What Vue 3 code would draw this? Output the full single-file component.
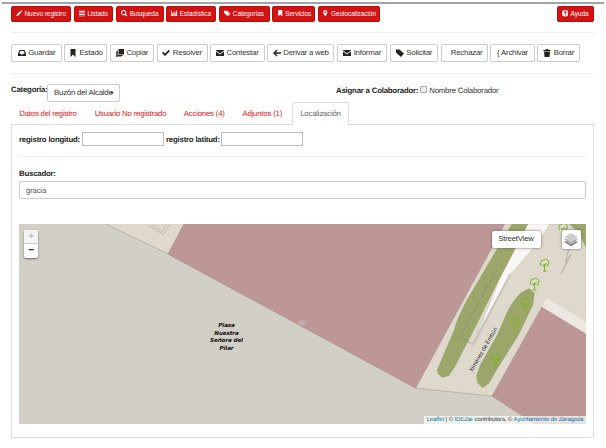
<script setup>
const icons = {
  pencil: 'M1 15l1-4 8-8 3 3-8 8zM11 2l1-1q1-1 2 0l1 1q1 1 0 2l-1 1z',
  list: 'M0 2h16v2H0zM0 6h16v2H0zM0 10h16v2H0zM0 14h16v1.5H0z',
  search: 'M6.5 0a6.5 6.5 0 1 0 3.4 12l3.5 3.7 2.3-2.3-3.7-3.5A6.5 6.5 0 0 0 6.5 0zm0 2.5a4 4 0 1 1 0 8 4 4 0 0 1 0-8z',
  chart: 'M0 1h2v12h14v2H0zM3 8h2v4H3zM6 4h2v8H6zM9 6h2v6H9zM12 2h3v10h-3z',
  tags: 'M0 2h6l7 7-5 6-8-8zM7 2h2l7 7-5 6-1-1 4-5z',
  bookmark: 'M3 0h10v16l-5-5-5 5z',
  pin: 'M8 0a5 5 0 0 0-5 5c0 4 5 11 5 11s5-7 5-11a5 5 0 0 0-5-5zm0 3a2.2 2.2 0 1 1 0 4.4A2.2 2.2 0 0 1 8 3z',
  help: 'M8 0a8 8 0 1 0 0 16A8 8 0 0 0 8 0zM7 11h2.4v2.4H7zM4.5 6q0-3.5 3.6-3.5 3.6 0 3.6 3 0 2-2.3 3v1.3H7V7.3q2-.6 2-1.7 0-.9-1-.9t-1 1.3z',
  inbox: 'M3 2h10l3 7v5H0V9zm1.5 2L2.5 9H5l1 2h4l1-2h2.5l-2-5z',
  copy: 'M5 0h11v11H5zM2.5 3H4v9h9v2H2.5zM0 5h1.5v10h9v1H0z',
  check: 'M0 8l2.5-2.5L6 9l7.5-7.5L16 4 6 14z',
  mail: 'M0 2h16v1L8 9 0 3zM0 5l8 6 8-6v9H0z',
  arrow: 'M0 8l7-7 2 2-3.5 3.5H16v3H5.5L9 13l-2 2z',
  tag: 'M0 1h7l9 8-6 7-10-9z',
  trash: 'M1 2h4l1-2h4l1 2h4v2H1zM2 5h12l-1 11H3z'
}
const nav = [
  { t: 'Nuevo registro', i: 'pencil', w: 60 },
  { t: 'Listado', i: 'list', w: 39.5 },
  { t: 'Busqueda', i: 'search', w: 47.5 },
  { t: 'Estadística', i: 'chart', w: 49.5 },
  { t: 'Categorías', i: 'tags', w: 51 },
  { t: 'Servicios', i: 'bookmark', w: 43 },
  { t: 'Geolocalización', i: 'pin', w: 62 }
]
const actions = [
  { t: 'Guardar', i: 'inbox', w: 51 },
  { t: 'Estado', i: 'bookmark', w: 43 },
  { t: 'Copiar', i: 'copy', w: 44.5 },
  { t: 'Resolver', i: 'check', w: 51 },
  { t: 'Contestar', i: 'mail', w: 54.5 },
  { t: 'Derivar a web', i: 'arrow', w: 67.5 },
  { t: 'Informar', i: 'mail', w: 50.5 },
  { t: 'Solicitar', i: 'tag', w: 48.5 },
  { t: 'Rechazar', gap: true, w: 47 },
  { t: '{ Archivar', w: 45 },
  { t: 'Borrar', i: 'trash', w: 42.5 }
]
const tabs = [
  { t: 'Datos del registro', w: 76 },
  { t: 'Usuario No registrado', w: 89 },
  { t: 'Acciones (4)', w: 58.5 },
  { t: 'Adjuntos (1)', w: 57.5 },
  { t: 'Localización', w: 57, on: true }
]
const trees = [[563, 228], [544.5, 264], [534.5, 283], [525, 303], [515, 322], [495.5, 359]]
</script>

<template>
  <div class="page">
    <div class="topline"></div>
    <nav class="nav">
      <button v-for="b in nav" :key="b.t" class="red" :style="{ width: b.w + 'px' }">
        <svg viewBox="0 0 16 16"><path :d="icons[b.i]" fill-rule="evenodd" /></svg><span>{{ b.t }}</span>
      </button>
      <button class="red help"><svg viewBox="0 0 16 16"><path :d="icons.help" fill-rule="evenodd" /></svg><span>Ayuda</span></button>
    </nav>
    <div class="actions">
      <button v-for="b in actions" :key="b.t" class="plain" :class="{ indent: b.gap }" :style="{ width: b.w + 'px' }">
        <svg v-if="b.i" viewBox="0 0 16 16"><path :d="icons[b.i]" fill-rule="evenodd" /></svg><span>{{ b.t }}</span>
      </button>
    </div>
    <div class="assign">
      <b class="cat">Categoría:</b>
      <div class="select"><span>Buzón del Alcalde</span><i></i></div>
      <div class="collab"><b>Asignar a Colaborador:</b><i class="check"></i><span>Nombre Colaborador</span></div>
    </div>
    <div class="tabs">
      <a v-for="t in tabs" :key="t.t" :class="{ on: t.on }" :style="{ width: t.w + 'px' }">{{ t.t }}</a>
    </div>
    <section class="panel">
      <div class="coords">
        <b class="lon">registro longitud:</b><i class="field"></i><b class="lat">registro latitud:</b><i class="field"></i>
      </div>
      <b class="label">Buscador:</b>
      <div class="query">gracia</div>
      <div class="map">
        <svg class="canvas" viewBox="19 224 567 200">
          <rect x="19" y="224" width="567" height="200" fill="#d1cfc6" />
          <path d="M106 224H184L168 254Z" fill="#dfd8cb" />
          <path d="M106 224L168 254L416 388L492 396L535 424" fill="none" stroke="#b3a99b" stroke-width=".8" />
          <path d="M149 226L163.5 234.5L169.5 225M152 225L162.5 231.5L166.5 224" fill="none" stroke="#aaa69e" stroke-width=".6" />
          <path d="M184 224H505L415.5 388L168 254Z" fill="#bd9696" stroke="#a99290" stroke-width=".5" />
          <path d="M505 224H586V334L492 396L416 388Z" fill="#dfd8cc" stroke="#b3a99b" stroke-width=".5" />
          <path d="M528 224H550L537 244L511.5 273L478 335L472 347L500 278Z" fill="#f8f7f5" stroke="#c4beb5" stroke-width=".5" />
          <path d="M510.5 274L473 344" stroke="#c9c4bb" stroke-width="2" />
          <path d="M511.7 224H528L500 278L474 330L455 366.7L449 375.7L442.7 377.7L438 374L437 370L454 330Q456 320 466.7 300Z" fill="#9ca66b" />
          <path d="M497 269L460 337L472 344" fill="none" stroke="#8d9763" stroke-width=".9" />
          <path d="M470 343L474 344L491 312" fill="none" stroke="#c9c4bb" stroke-width="1.5" />
          <path d="M529 288.3L534.7 292.7L533 305L518.7 335L496.7 370L489.3 383.3L482.7 388L477.3 383L476.3 376L480 365L497 335L508 310Q514 299 521.7 292Z" fill="#9ca66b" />
          <path d="M569 224H586V248L578 232Z" fill="#9ca66b" />
          <path d="M547 298.3L586 322V334L541.7 307.3Z" fill="#ede8df" />
          <path d="M541.7 307.3L586 334V424H535L492 396Z" fill="#bd9696" stroke="#a99290" stroke-width=".5" />
          <path d="M569 248L565.5 263L571 254L561 274" fill="none" stroke="#bbb6ae" stroke-width="1.3" />
          <g v-for="(p, i) in trees" :key="i" :transform="`translate(${p[0]} ${p[1]})`" fill="none" stroke="#7ab51c" stroke-width="1">
            <path d="M-3 2Q-5 1-4-1-4-4-1-4 1-6 3-4 5-3 4-1 5 2 2 2M0 7V0M0 3L-2 0M0 2L2-1M-1.5 7H2" />
          </g>
        </svg>
        <div class="plaza">Plaza<br>Nuestra<br>Señora del<br>Pilar</div>
        <span class="number">18</span>
        <span class="street">Ximénez de Embún</span>
        <div class="zoom"><span class="off">+</span><span>−</span></div>
        <button class="sv">StreetView</button>
        <div class="layers">
          <svg viewBox="0 0 16 16">
            <path d="M1 10L8 6.5L15 10L8 14.5Z" fill="#888" />
            <path d="M1 7.5L8 4L15 7.5L8 12Z" fill="#aaa" stroke="#fff" stroke-width=".4" />
            <path d="M1 5L8 1L15 5L8 9.5Z" fill="#ccc" stroke="#fff" stroke-width=".4" />
          </svg>
        </div>
        <div class="credit"><a>Leaflet</a> | © <a>IDEZar</a> contributors, © <a>Ayuntamiento de Zaragoza</a></div>
      </div>
    </section>
  </div>
</template>

<style>
body { margin: 0; background: #fff; overflow: hidden; }
</style>
<style scoped>
* { box-sizing: border-box; }
.page { width: 606px; height: 448px; padding: 2px 12px 0 11px; font: 7.8px/10px "Liberation Sans", Arial, sans-serif; letter-spacing: -.2px; color: #333; text-rendering: geometricPrecision; white-space: nowrap; }
.topline { height: 1.5px; margin: 0 -10px 0 -9px; background: #a3a3a3; }
button { font: inherit; letter-spacing: inherit; padding: 0; margin: 0; display: flex; align-items: center; justify-content: center; flex: none; }
.nav { display: flex; gap: 2.8px; height: 29px; padding-top: 2px; border-bottom: 1px solid #eee; }
.red { height: 16px; gap: 2px; border: 1px solid #b90e0e; border-radius: 2px; background: #d31313; color: #fff; font-size: 6.4px; letter-spacing: 0; }
.red svg { width: 6.5px; height: 6.5px; fill: #fff; }
.help { width: 37.5px; margin-left: auto; }
.actions { display: flex; gap: 2.4px; height: 41px; padding-top: 11px; border-bottom: 1px solid #eee; }
.plain { height: 18.5px; gap: 2.5px; border: 1px solid #ccc; border-radius: 2px; background: #fff; color: #333; }
.plain svg { width: 8px; height: 8px; fill: #222; }
.plain span { padding-top: 1px; }
.indent { padding-left: 5px; }
b { color: #222; }
.assign { display: flex; height: 28.5px; }
.cat { width: 36px; padding-top: 11px; }
.select { width: 73px; height: 18px; margin-top: 10.5px; padding: 0 5px 0 6px; display: flex; align-items: center; border: 1px solid #ccc; border-radius: 2px; }
.select i { border: 2px solid transparent; border-top: 2.5px solid #222; border-bottom: 0; margin-left: -3px; }
.collab { display: flex; margin-left: 216px; padding-top: 12.5px; }
.check { width: 7px; height: 7px; margin: 0 2px 0 2px; border: 1px solid #aaa; border-radius: 1px; background: #eee; }
.tabs { display: flex; height: 22px; position: relative; }
.tabs a { color: #d9201f; text-align: center; line-height: 20px; padding-right: 2px; padding-top: 1.5px; }
.tabs a.on { color: #666; border: 1px solid #ddd; border-bottom: 0; border-radius: 2px 2px 0 0; background: #fff; height: 23px; padding: .5px 0 0; }
.panel { height: 314px; border: 1px solid #ddd; padding: 0 7px; }
.coords { display: flex; height: 32px; padding-top: 7px; border-bottom: 1px solid #eee; line-height: 15px; }
.lon { width: 63px; }
.lat { width: 57px; padding-left: 2px; }
.field { width: 82px; height: 14px; border: 1px solid #bbb; }
.label { display: block; padding-top: 12px; height: 24px; }
.query { height: 18px; line-height: 17px; padding-left: 6px; border: 1px solid #ccc; border-radius: 2px; color: #555; }
.map { position: relative; height: 200px; margin-top: 25px; overflow: hidden; }
.canvas { display: block; width: 567px; height: 200px; }
.plaza { position: absolute; left: 181px; top: 99px; width: 53px; text-align: center; font: italic bold 5.6px/7.5px "DejaVu Sans", sans-serif; letter-spacing: -.1px; color: #111; }
.number { position: absolute; left: 279px; top: 95px; font-size: 6px; color: #777; text-shadow: 0 0 1px #fff, 0 0 1px #fff; }
.street { position: absolute; left: 436px; top: 121.5px; width: 58px; text-align: center; font: 5.5px/8px "DejaVu Sans", sans-serif; color: #111; transform: rotate(-60deg); text-shadow: 0 0 1px #fff; }
.zoom, .sv, .layers { position: absolute; background: #fff; box-shadow: 0 0 2.5px #555; border-radius: 2px; }
.zoom { left: 5px; top: 5.5px; width: 14px; height: 28px; overflow: hidden; text-align: center; font: bold 10px/13px "Liberation Sans", sans-serif; color: #111; box-shadow: 0 1px 2px #666; }
.zoom span { display: block; height: 14px; }
.zoom .off { color: #bbb; background: #f4f4f4; border-bottom: 1px solid #ccc; }
.sv { left: 472.5px; top: 6.5px; width: 49px; height: 17px; border: 0; color: #333; }
.layers { left: 542.5px; top: 6px; width: 19px; height: 19px; display: grid; place-items: center; }
.layers svg { width: 16px; height: 16px; }
.credit { position: absolute; right: 0; bottom: 0; width: 162px; height: 8.5px; font-size: 6px; letter-spacing: -.09px; line-height: 8.5px; text-align: center; background: rgba(255, 255, 255, .7); }
.credit a { color: #0078a8; }
</style>
